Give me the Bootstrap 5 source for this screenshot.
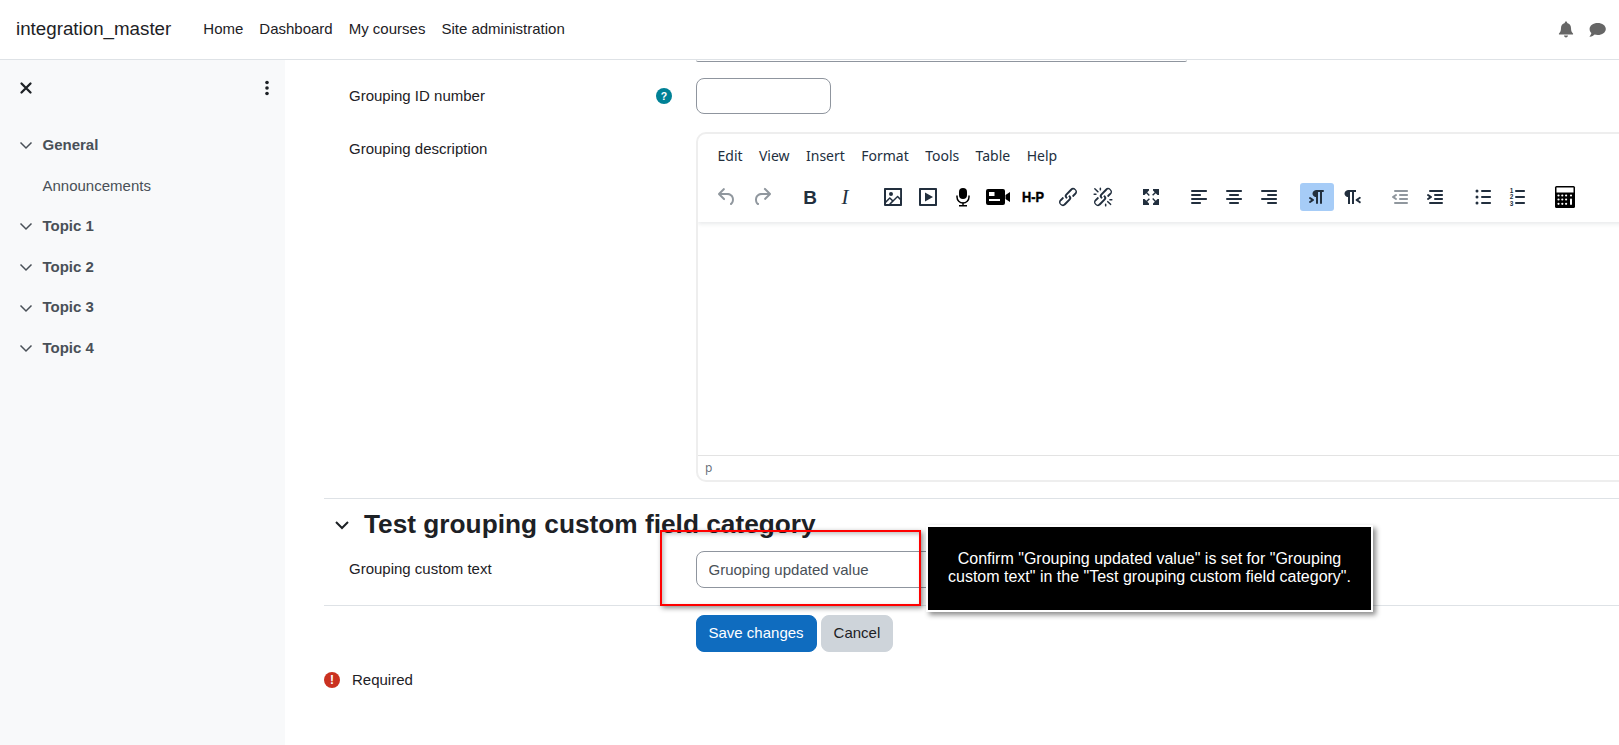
<!DOCTYPE html>
<html lang="en">
<head>
<meta charset="utf-8">
<title>Edit grouping</title>
<link href="https://cdn.jsdelivr.net/npm/bootstrap@5.3.0/dist/css/bootstrap.min.css" rel="stylesheet">
<style>
html,body{height:100%;overflow:hidden}
body{font-family:"Liberation Sans",Arial,sans-serif;font-size:15px;color:#1d2125;background:#fff;position:relative}
.shell{height:745px;display:flex;flex-direction:column}
.topbar{height:60px;flex:none;padding:0 0 0 16px;border-bottom:1px solid #dee2e6;background:#fff}
.topbar .navbar-brand{font-size:18.75px;color:#1d2125;padding:0;margin:0 24px 0 0}
.topbar .nav-link{color:#1d2125;padding:0 8px;font-size:15px}
.top-icons{margin-left:auto;gap:15px;padding-right:13px}
.body-row{flex:1;display:flex;min-height:0}
.sidebar{width:285px;flex:none;background:#f8f9fa;padding:8px 0 0 0}
.side-head{height:40px;padding:0 15px 0 19px;margin-bottom:17px}
.side-item{height:40.6px;display:flex;align-items:center;color:#495057;padding-left:19px;gap:9.5px}
.side-item strong{font-weight:700}
.side-sub{padding-left:42.500px;color:#495057;padding-top:1px}
.content{flex:1;min-width:0;overflow:hidden;padding-left:39px}
.peek{height:2px;margin-left:372px;width:491px;border-bottom:1.5px solid #8f959e;border-radius:0 0 4px 4px}
.form-line{display:flex;padding-left:25px}
.form-label-cell{width:347px;flex:none;display:flex;justify-content:space-between;padding-right:24px;line-height:18px}
.pad-a{padding-top:9px}
.pad-b{padding-top:8px}
.help-dot{width:16px;height:16px;border-radius:50%;background:#008196;color:#fff;font-size:10.5px;font-weight:700;line-height:16px;text-align:center;margin-top:1px}
.field{height:36px;border:1px solid #8f959e;border-radius:8px;box-shadow:none;font-size:15px;color:#495057;padding:6px 11.500px}
.field-id{width:135px}
.field-text{width:300px;height:37px}
.editor{width:1000px;height:350px;border:2px solid #eee;border-radius:10px;display:flex;flex-direction:column;flex:none;overflow:hidden;color:#222f3e}
.ed-head{height:88px;flex:none;box-shadow:0 2px 4px rgba(34,47,62,.1);position:relative}
.ed-menu{display:flex;height:46px;padding:11px 0 0 19.500px;font-family:"Noto Sans","Open Sans",sans-serif;font-size:14px;line-height:21px}
.ed-menu span{margin-right:16.400px}
.ed-tools{display:flex;padding-left:12px;height:28px;margin-top:3px}
.ed-group{display:flex;margin-right:13px}
.ed-btn{width:34px;height:28px;margin-right:1px;display:flex;align-items:center;justify-content:center;border-radius:3px;border:0;background:none;padding:0;color:#222f3e}
.ed-btn svg{width:24px;height:24px;fill:currentColor}
.ed-off{color:rgba(34,47,62,.5)}
.ed-on{background:#a6ccf7}
.ed-black{color:#000}
.glyph-b{font-family:"Liberation Sans",sans-serif;font-weight:700;font-size:19px;line-height:1}
.glyph-i{font-family:"Liberation Serif",serif;font-style:italic;font-size:21px;line-height:1}
.ed-body{flex:1}
.ed-status{height:25px;flex:none;border-top:1px solid #e3e3e3;font-family:"Noto Sans","Open Sans",sans-serif;font-size:12px;padding-left:7px;line-height:24px;color:rgba(34,47,62,.7)}
.rule{border-top:1px solid #dee2e6;opacity:1;margin:0}
.cat-head{display:flex;align-items:center;height:52px;padding-left:10px;gap:14px}
.cat-head h3{font-size:26.25px;font-weight:700;margin:0;color:#1d2125;line-height:1.2}
.btn-save{background:#0f6cbf;border-color:#0f6cbf;border-radius:8px;font-size:15px;height:37px;padding:0 12.500px 0 11.500px;margin-right:4px}
.btn-quit{background:#ced4da;border-color:#ced4da;color:#1d2125;border-radius:8px;font-size:15px;height:37px;padding:0 11.500px}
.req-dot{width:16px;height:16px;border-radius:50%;background:#ca3120;color:#fff;font-size:12px;font-weight:700;line-height:16px;text-align:center}
.hilite{position:absolute;left:660px;top:530px;width:261px;height:76px;border:2px solid #f00;box-shadow:2px 2px 5px rgba(0,0,0,.45),inset 2px 2px 4px rgba(0,0,0,.25);z-index:5;pointer-events:none}
.callout{position:absolute;left:926px;top:525px;width:447px;height:87px;background:#000;border:2px solid #fff;box-shadow:3px 3px 5px rgba(0,0,0,.45);color:#fff;font-size:16px;line-height:18.400px;text-align:center;padding:23px 16px 0;z-index:6}
</style>
</head>
<body>
<div class="shell">
<nav class="navbar navbar-expand topbar">
  <a class="navbar-brand" href="#">integration_master</a>
  <ul class="navbar-nav">
    <li class="nav-item"><a class="nav-link" href="#">Home</a></li>
    <li class="nav-item"><a class="nav-link" href="#">Dashboard</a></li>
    <li class="nav-item"><a class="nav-link" href="#">My courses</a></li>
    <li class="nav-item"><a class="nav-link" href="#">Site administration</a></li>
  </ul>
  <div class="d-flex align-items-center top-icons">
    <svg width="16" height="17" viewBox="0 0 16 17" fill="#666"><path d="M8 0.5c.7 0 1.2.5 1.2 1.2v.4c2.4.5 3.8 2.5 3.8 4.9 0 3 .8 4.3 2 5.6.3.4.1 1-.5 1H1.500c-.6 0-.8-.6-.5-1 1.200-1.300 2-2.600 2-5.600 0-2.400 1.400-4.400 3.800-4.900v-.4C6.800 1 7.300.5 8 .5zM6 14.600h4c0 1.100-.9 1.900-2 1.900s-2-.8-2-1.900z"/></svg>
    <svg width="17" height="16" viewBox="0 0 17 16" fill="#666"><path d="M8.700 1C13.200 1 16.800 3.600 16.800 7s-3.600 6-8.100 6c-1.100 0-2.100-.2-3.100-.5C4.500 13.600 2.900 14.500.8 14.800c-.2 0-.3-.2-.2-.3.900-1 1.500-2.300 1.800-3.400C1.200 10 .6 8.600.6 7 .6 3.600 4.200 1 8.700 1z"/></svg>
  </div>
</nav>
<div class="body-row">
  <aside class="sidebar">
    <div class="d-flex align-items-center justify-content-between side-head">
      <svg width="14" height="14" viewBox="0 0 14 14"><path d="M2.500 2.500l9 9M11.500 2.500l-9 9" stroke="#1d2125" stroke-width="2.300" stroke-linecap="round"/></svg>
      <svg width="6" height="16" viewBox="0 0 6 16" fill="#1d2125"><circle cx="3" cy="2.500" r="1.800"/><circle cx="3" cy="8" r="1.800"/><circle cx="3" cy="13.500" r="1.800"/></svg>
    </div>
    <div class="side-item"><svg width="14" height="14" viewBox="0 0 14 14"><path d="M1.500 4.500L7 10l5.500-5.500" fill="none" stroke="#495057" stroke-width="1.500"/></svg><strong>General</strong></div>
    <div class="side-item side-sub">Announcements</div>
    <div class="side-item"><svg width="14" height="14" viewBox="0 0 14 14"><path d="M1.500 4.500L7 10l5.500-5.500" fill="none" stroke="#495057" stroke-width="1.500"/></svg><strong>Topic 1</strong></div>
    <div class="side-item"><svg width="14" height="14" viewBox="0 0 14 14"><path d="M1.500 4.500L7 10l5.500-5.500" fill="none" stroke="#495057" stroke-width="1.500"/></svg><strong>Topic 2</strong></div>
    <div class="side-item"><svg width="14" height="14" viewBox="0 0 14 14"><path d="M1.500 4.500L7 10l5.500-5.500" fill="none" stroke="#495057" stroke-width="1.500"/></svg><strong>Topic 3</strong></div>
    <div class="side-item"><svg width="14" height="14" viewBox="0 0 14 14"><path d="M1.500 4.500L7 10l5.500-5.500" fill="none" stroke="#495057" stroke-width="1.500"/></svg><strong>Topic 4</strong></div>
  </aside>
  <main class="content">
    <div class="peek"></div>
    <div class="form-line mt-3" style="margin-bottom:18px">
      <div class="form-label-cell pad-a"><span>Grouping ID number</span><span class="help-dot">?</span></div>
      <input class="form-control field field-id" type="text" aria-label="Grouping ID number">
    </div>
    <div class="form-line" style="margin-bottom:16px">
      <div class="form-label-cell pad-b"><span>Grouping description</span></div>
      <div class="editor">
        <div class="ed-head">
          <div class="ed-menu"><span>Edit</span><span>View</span><span>Insert</span><span>Format</span><span>Tools</span><span>Table</span><span>Help</span></div>
          <div class="ed-tools">
            <div class="ed-group">
              <button class="ed-btn ed-off" type="button" aria-label="Undo"><svg viewBox="0 0 24 24"><path d="M6.400 8H12c3.700 0 6.200 2 6.800 5.100.6 2.700-.4 5.600-2.300 6.800a1 1 0 0 1-1-1.800c1.100-.7 1.800-2.700 1.400-4.600-.5-2.100-2.100-3.500-4.900-3.500H6.400l3.300 3.300a1 1 0 1 1-1.400 1.400l-5-5a1 1 0 0 1 0-1.400l5-5a1 1 0 0 1 1.400 1.400L6.400 8Z"/></svg></button>
              <button class="ed-btn ed-off" type="button" aria-label="Redo"><svg viewBox="0 0 24 24"><path d="M17.600 10H12c-2.800 0-4.400 1.400-4.900 3.500-.4 2 .3 4 1.400 4.600a1 1 0 1 1-1 1.800c-2-1.200-2.900-4.100-2.300-6.800.6-3 3-5.100 6.800-5.100h5.600l-3.300-3.300a1 1 0 1 1 1.400-1.400l5 5a1 1 0 0 1 0 1.400l-5 5a1 1 0 0 1-1.400-1.400l3.300-3.300Z"/></svg></button>
            </div>
            <div class="ed-group">
              <button class="ed-btn" type="button"><span class="glyph-b">B</span></button>
              <button class="ed-btn" type="button"><span class="glyph-i">I</span></button>
            </div>
            <div class="ed-group">
              <button class="ed-btn" type="button" aria-label="Image"><svg viewBox="0 0 24 24"><path d="m5 15.700 3.300-3.200c.3-.3.700-.3 1 0L12 15l4.100-4c.3-.4.800-.4 1 0l2 1.900V5H5v10.700ZM5 18v1h3l2.800-2.900-2-2L5 17.900Zm14-3-2.500-2.400-6.400 6.500H19v-4ZM4 3h16c.6 0 1 .4 1 1v16c0 .6-.4 1-1 1H4a1 1 0 0 1-1-1V4c0-.6.4-1 1-1Zm6 8a2 2 0 1 0 0-4 2 2 0 0 0 0 4Z"/></svg></button>
              <button class="ed-btn" type="button" aria-label="Media"><svg viewBox="0 0 24 24"><path d="M4 3h16c.6 0 1 .4 1 1v16c0 .6-.4 1-1 1H4a1 1 0 0 1-1-1V4c0-.6.4-1 1-1Zm1 2v14h14V5H5Zm4 2.500 8 4.500-8 4.500v-9Z"/></svg></button>
              <button class="ed-btn ed-black" type="button" aria-label="Record audio"><svg viewBox="0 0 24 24"><rect x="8" y="3" width="8" height="11" rx="4"/><path d="M6 10.500V12a6 6 0 0 0 12 0v-1.500" fill="none" stroke="#000" stroke-width="1.500"/><path d="M11.300 17.500h1.400V20H16v1.500H8V20h3.300z"/></svg></button>
              <button class="ed-btn ed-black" type="button" aria-label="Record video"><svg viewBox="0 0 24 24"><path d="M2 4h15a2 2 0 0 1 2 2v12a2 2 0 0 1-2 2H2a2 2 0 0 1-2-2V6a2 2 0 0 1 2-2Zm17.500 6 4.500-3v10l-4.500-3v-4Z"/><rect x="3" y="7" width="5.500" height="4" fill="#fff"/><rect x="3" y="14" width="11" height="2" fill="#fff"/></svg></button>
              <button class="ed-btn ed-black" type="button" aria-label="H5P"><svg viewBox="0 0 24 24"><text x="12" y="17" text-anchor="middle" font-family="Liberation Sans" font-weight="700" font-size="14" textLength="22" lengthAdjust="spacingAndGlyphs" stroke="#000" stroke-width=".4">H-P</text></svg></button>
              <button class="ed-btn" type="button" aria-label="Link"><svg viewBox="0 0 24 24"><path d="M6.200 12.300a1 1 0 0 1 1.400 1.400l-2 2a2 2 0 1 0 2.600 2.800l4.800-4.800a1 1 0 0 0 0-1.400 1 1 0 1 1 1.400-1.300 2.900 2.900 0 0 1 0 4L9.600 20a3.900 3.900 0 0 1-5.500-5.500l2-2Zm11.600-.6a1 1 0 0 1-1.400-1.400l2-2a2 2 0 1 0-2.600-2.800L11 10.300a1 1 0 0 0 0 1.400 1 1 0 1 1-1.400 1.300 2.900 2.900 0 0 1 0-4L14.400 4a3.900 3.900 0 0 1 5.500 5.500l-2 2Z"/></svg></button>
              <button class="ed-btn" type="button" aria-label="Unlink"><svg viewBox="0 0 24 24"><path d="M6.200 12.300a1 1 0 0 1 1.400 1.400l-2.100 2a2 2 0 1 0 2.700 2.800l4.800-4.800a1 1 0 0 0 0-1.400 1 1 0 1 1 1.400-1.300 2.900 2.900 0 0 1 0 4L9.600 20a3.900 3.900 0 0 1-5.500-5.500l2-2Zm11.600-.6a1 1 0 0 1-1.400-1.400l2.100-2a2 2 0 1 0-2.700-2.800L11 10.300a1 1 0 0 0 0 1.400A1 1 0 1 1 9.600 13a2.900 2.900 0 0 1 0-4L14.400 4a3.900 3.900 0 0 1 5.500 5.500l-2 2ZM7.600 6.300a.8.800 0 0 1-1 1.100L3.300 4.200a.7.700 0 1 1 1-1l3.200 3.100ZM5.100 8.600a.8.800 0 0 1 0 1.500H3a.8.800 0 0 1 0-1.500H5Zm5-3.500a.8.800 0 0 1-1.500 0V3a.8.800 0 0 1 1.500 0V5Zm6 11.800a.8.800 0 0 1 1-1l3.200 3.200a.8.800 0 0 1-1 1L16 17Zm-2.200 2a.8.800 0 0 1 1.500 0V21a.8.8 0 0 1-1.500 0V19Zm5-3.500a.7.700 0 1 1 0-1.500H21a.8.800 0 0 1 0 1.500H19Z"/></svg></button>
            </div>
            <div class="ed-group">
              <button class="ed-btn" type="button" aria-label="Fullscreen"><svg viewBox="0 0 24 24"><path d="M4 4h6v1.500L8.200 7.300l2.600 2.600-1 1-2.600-2.600L5.500 10H4V4Zm16 0v6h-1.500l-1.800-1.800-2.600 2.600-1-1 2.600-2.600L14 5.500V4h6ZM4 20v-6h1.500l1.800 1.800 2.600-2.600 1 1-2.600 2.600 1.700 1.700V20H4Zm16 0h-6v-1.500l1.800-1.800-2.600-2.600 1-1 2.600 2.600 1.700-1.700H20V20Z"/></svg></button>
            </div>
            <div class="ed-group">
              <button class="ed-btn" type="button" aria-label="Align left"><svg viewBox="0 0 24 24"><path d="M5 5h14c.6 0 1 .4 1 1s-.4 1-1 1H5a1 1 0 1 1 0-2Zm0 4h8c.6 0 1 .4 1 1s-.4 1-1 1H5a1 1 0 1 1 0-2Zm0 8h8c.6 0 1 .4 1 1s-.4 1-1 1H5a1 1 0 0 1 0-2Zm0-4h14c.6 0 1 .4 1 1s-.4 1-1 1H5a1 1 0 0 1 0-2Z"/></svg></button>
              <button class="ed-btn" type="button" aria-label="Align center"><svg viewBox="0 0 24 24"><path d="M5 5h14c.6 0 1 .4 1 1s-.4 1-1 1H5a1 1 0 1 1 0-2Zm3 4h8c.6 0 1 .4 1 1s-.4 1-1 1H8a1 1 0 1 1 0-2Zm0 8h8c.6 0 1 .4 1 1s-.4 1-1 1H8a1 1 0 0 1 0-2Zm-3-4h14c.6 0 1 .4 1 1s-.4 1-1 1H5a1 1 0 0 1 0-2Z"/></svg></button>
              <button class="ed-btn" type="button" aria-label="Align right"><svg viewBox="0 0 24 24"><path d="M5 5h14c.6 0 1 .4 1 1s-.4 1-1 1H5a1 1 0 1 1 0-2Zm6 4h8c.6 0 1 .4 1 1s-.4 1-1 1h-8a1 1 0 0 1 0-2Zm0 8h8c.6 0 1 .4 1 1s-.4 1-1 1h-8a1 1 0 0 1 0-2Zm-6-4h14c.6 0 1 .4 1 1s-.4 1-1 1H5a1 1 0 0 1 0-2Z"/></svg></button>
            </div>
            <div class="ed-group">
              <button class="ed-btn ed-on" type="button" aria-label="Left to right"><svg viewBox="0 0 24 24"><path d="M11 5h7a1 1 0 0 1 0 2h-1v11a1 1 0 0 1-2 0V7h-2v11a1 1 0 0 1-2 0v-6c-.5 0-1 0-1.400-.3A3.400 3.400 0 0 1 7.800 10a3.300 3.300 0 0 1 0-2.800 3.400 3.400 0 0 1 1.800-1.800L11 5ZM4.400 16.200 6.200 15l-1.800-1.200a1 1 0 0 1 1.200-1.600l3 2a1 1 0 0 1 0 1.600l-3 2a1 1 0 1 1-1.200-1.600Z"/></svg></button>
              <button class="ed-btn" type="button" aria-label="Right to left"><svg viewBox="0 0 24 24"><path d="M8 5h8v2h-2v12h-2V7h-2v12H8v-7c-.5 0-1 0-1.400-.3A3.400 3.400 0 0 1 4.800 10a3.300 3.300 0 0 1 0-2.800 3.400 3.400 0 0 1 1.800-1.800L8 5Zm12 11.200a1 1 0 1 1-1 1.600l-3-2a1 1 0 0 1 0-1.600l3-2a1 1 0 1 1 1 1.600L18.400 15l1.800 1.200Z"/></svg></button>
            </div>
            <div class="ed-group">
              <button class="ed-btn ed-off" type="button" aria-label="Outdent"><svg viewBox="0 0 24 24"><path d="M7 5h12c.6 0 1 .4 1 1s-.4 1-1 1H7a1 1 0 1 1 0-2Zm5 4h7c.6 0 1 .4 1 1s-.4 1-1 1h-7a1 1 0 0 1 0-2Zm0 4h7c.6 0 1 .4 1 1s-.4 1-1 1h-7a1 1 0 0 1 0-2Zm-5 4h12a1 1 0 0 1 0 2H7a1 1 0 0 1 0-2Zm1.600-3.800a1 1 0 0 1-1.200 1.600l-3-2a1 1 0 0 1 0-1.600l3-2a1 1 0 0 1 1.200 1.600L6.800 12l1.800 1.200Z"/></svg></button>
              <button class="ed-btn" type="button" aria-label="Indent"><svg viewBox="0 0 24 24"><path d="M7 5h12c.6 0 1 .4 1 1s-.4 1-1 1H7a1 1 0 1 1 0-2Zm5 4h7c.6 0 1 .4 1 1s-.4 1-1 1h-7a1 1 0 0 1 0-2Zm0 4h7c.6 0 1 .4 1 1s-.4 1-1 1h-7a1 1 0 0 1 0-2Zm-5 4h12a1 1 0 0 1 0 2H7a1 1 0 0 1 0-2Zm-2.600-3.800L6.200 12l-1.800-1.200a1 1 0 0 1 1.200-1.600l3 2a1 1 0 0 1 0 1.600l-3 2a1 1 0 1 1-1.200-1.600Z"/></svg></button>
            </div>
            <div class="ed-group">
              <button class="ed-btn" type="button" aria-label="Bullet list"><svg viewBox="0 0 24 24"><path d="M11 5h8c.6 0 1 .4 1 1s-.4 1-1 1h-8a1 1 0 0 1 0-2Zm0 6h8c.6 0 1 .4 1 1s-.4 1-1 1h-8a1 1 0 0 1 0-2Zm0 6h8c.6 0 1 .4 1 1s-.4 1-1 1h-8a1 1 0 0 1 0-2Z"/><circle cx="6" cy="6" r="1.500"/><circle cx="6" cy="12" r="1.500"/><circle cx="6" cy="18" r="1.500"/></svg></button>
              <button class="ed-btn" type="button" aria-label="Numbered list"><svg viewBox="0 0 24 24"><path d="M10 17h8c.6 0 1 .4 1 1s-.4 1-1 1h-8a1 1 0 0 1 0-2Zm0-6h8c.6 0 1 .4 1 1s-.4 1-1 1h-8a1 1 0 0 1 0-2Zm0-6h8c.6 0 1 .4 1 1s-.4 1-1 1h-8a1 1 0 1 1 0-2Z"/><g font-family="Liberation Sans" font-size="6.500" font-weight="700" text-anchor="middle"><text x="5.500" y="8">1</text><text x="5.500" y="14.300">2</text><text x="5.500" y="20.500">3</text></g></svg></button>
            </div>
            <div class="ed-group" style="margin-left:-1px">
              <button class="ed-btn ed-black" type="button" aria-label="Calculator"><svg viewBox="0 0 24 24"><rect x="2" y="1" width="20" height="22" rx="1.500"/><rect x="3.500" y="2.500" width="17" height="5" fill="#fff"/><g fill="#fff"><circle cx="5.500" cy="10.500" r="1.100"/><circle cx="9.300" cy="10.500" r="1.100"/><circle cx="13.100" cy="10.500" r="1.100"/><circle cx="5.500" cy="14.500" r="1.100"/><circle cx="9.300" cy="14.500" r="1.100"/><circle cx="13.100" cy="14.500" r="1.100"/><circle cx="5.500" cy="18.800" r="1.100"/><circle cx="9.300" cy="18.800" r="1.100"/><circle cx="13.100" cy="18.800" r="1.100"/><circle cx="18" cy="10.500" r="1.100"/><rect x="17" y="13.500" width="2" height="6.500" rx="1"/></g></svg></button>
            </div>
          </div>
        </div>
        <div class="ed-body"></div>
        <div class="ed-status">p</div>
      </div>
    </div>
    <hr class="rule">
    <div class="cat-head">
      <svg width="16" height="16" viewBox="0 0 16 16"><path d="M2 5l6 6 6-6" fill="none" stroke="#1d2125" stroke-width="2"/></svg>
      <h3>Test grouping custom field category</h3>
    </div>
    <div class="form-line" style="height:54px">
      <div class="form-label-cell pad-a"><span>Grouping custom text</span></div>
      <input class="form-control field field-text" type="text" value="Gruoping updated value" aria-label="Grouping custom text">
    </div>
    <hr class="rule">
    <div class="d-flex" style="padding-left:372px;padding-top:9px">
      <button class="btn btn-primary btn-save" type="button">Save changes</button>
      <button class="btn btn-quit" type="button">Cancel</button>
    </div>
    <div class="d-flex align-items-center" style="margin-top:17px;gap:12px">
      <span class="req-dot">!</span><span>Required</span>
    </div>
  </main>
</div>
</div>
<div class="hilite"></div>
<div class="callout">Confirm "Grouping updated value" is set for "Grouping custom text" in the "Test grouping custom field category".</div>
<script src="https://cdn.jsdelivr.net/npm/bootstrap@5.3.0/dist/js/bootstrap.bundle.min.js"></script>
</body>
</html>
